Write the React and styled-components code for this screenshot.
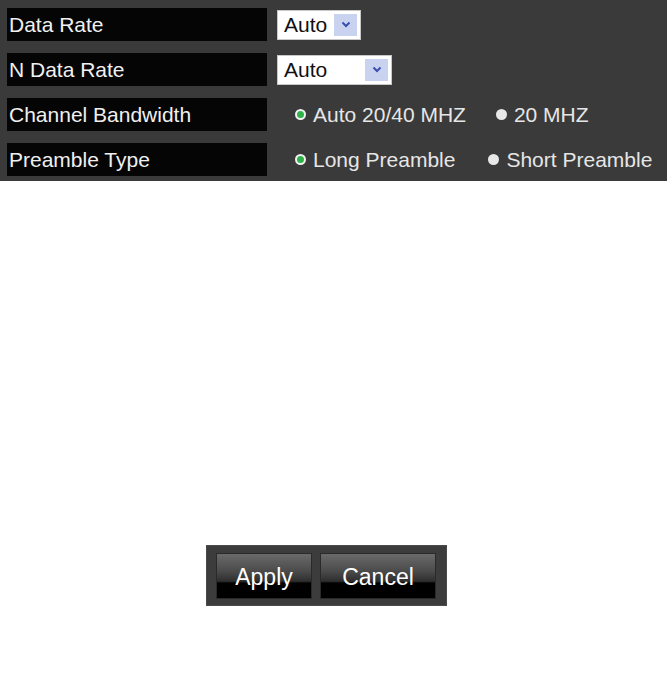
import React, { useState } from "react";
import styled, { createGlobalStyle } from "styled-components";

const GlobalStyle = createGlobalStyle`
  html, body {
    margin: 0;
    padding: 0;
    background: #ffffff;
    font-family: "Liberation Sans", Arial, sans-serif;
  }
`;

const rows = [
  { label: "Data Rate", kind: "select", width: 84 },
  { label: "N Data Rate", kind: "select", width: 115 },
  {
    label: "Channel Bandwidth",
    kind: "radio",
    options: [
      { text: "Auto 20/40 MHZ", gap: 30 },
      { text: "20 MHZ" },
    ],
  },
  {
    label: "Preamble Type",
    kind: "radio",
    options: [
      { text: "Long Preamble", gap: 33 },
      { text: "Short Preamble" },
    ],
  },
];

const App = () => {
  const [picked, setPicked] = useState({ 2: 0, 3: 0 });

  return (
    <Page>
      <GlobalStyle />
      <Panel>
        {rows.map((row, i) => (
          <Row key={row.label}>
            <Label>{row.label}</Label>
            {row.kind === "select" ? (
              <Select $width={row.width}>
                <span>Auto</span>
                <Arrow>
                  <svg width="10" height="7" viewBox="0 0 10 7">
                    <path d="M1.5 1.5 L5 5 L8.5 1.5" fill="none" stroke="#3a4fb0" strokeWidth="2" />
                  </svg>
                </Arrow>
              </Select>
            ) : (
              <Radios>
                {row.options.map((opt, j) => (
                  <RadioItem
                    key={opt.text}
                    $gap={opt.gap || 0}
                    onClick={() => setPicked({ ...picked, [i]: j })}
                  >
                    <Dot $on={picked[i] === j} />
                    {opt.text}
                  </RadioItem>
                ))}
              </Radios>
            )}
          </Row>
        ))}
      </Panel>
      <Footer>
        <ButtonBox>
          <Button $width={96}>Apply</Button>
          <Button $width={116}>Cancel</Button>
        </ButtonBox>
      </Footer>
    </Page>
  );
};

const Page = styled.div`
  width: 667px;
  height: 691px;
  display: flex;
  flex-direction: column;
`;

const Panel = styled.div`
  background: #3a3a3a;
  height: 181px;
  padding: 8px 0 0 7px;
  box-sizing: border-box;
  display: flex;
  flex-direction: column;
  gap: 12px;
`;

const Row = styled.div`
  display: flex;
  align-items: center;
  height: 33px;
`;

const Label = styled.div`
  width: 260px;
  height: 33px;
  background: #050505;
  color: #f0f0f0;
  font-size: 21px;
  line-height: 33px;
  padding-left: 2px;
  box-sizing: border-box;
  flex-shrink: 0;
  white-space: nowrap;
`;

const Select = styled.div`
  margin-left: 10px;
  width: ${(p) => p.$width}px;
  height: 30px;
  background: #ffffff;
  border: 1px solid #c8c8c8;
  box-sizing: border-box;
  display: flex;
  align-items: center;
  justify-content: space-between;
  padding: 0 3px 0 6px;
  font-size: 21px;
  color: #111;
`;

const Arrow = styled.div`
  width: 23px;
  height: 22px;
  background: #c9d3ef;
  display: flex;
  align-items: center;
  justify-content: center;
`;

const Radios = styled.div`
  display: flex;
  align-items: center;
  margin-left: 28px;
`;

const RadioItem = styled.div`
  display: flex;
  align-items: center;
  gap: 7px;
  margin-right: ${(p) => p.$gap}px;
  color: #e6e6e6;
  font-size: 21px;
  white-space: nowrap;
  cursor: pointer;
`;

const Dot = styled.span`
  width: 11px;
  height: 11px;
  border-radius: 50%;
  background: ${(p) => (p.$on ? "#2fb24a" : "#e8e8e8")};
  border: ${(p) => (p.$on ? "2.5px solid #f2f2f2" : "0")};
  box-sizing: border-box;
  display: inline-block;
  flex-shrink: 0;
`;

const Footer = styled.div`
  display: flex;
  padding: 364px 0 0 206px;
`;

const ButtonBox = styled.div`
  width: 241px;
  height: 61px;
  background: #3c3c3c;
  border: 1px solid #4a4a4a;
  box-sizing: border-box;
  display: flex;
  align-items: center;
  gap: 8px;
  padding-left: 9px;
`;

const Button = styled.div`
  width: ${(p) => p.$width}px;
  height: 46px;
  background: linear-gradient(
    to bottom,
    #6a6a6a 0%,
    #4a4a4a 40%,
    #2e2e2e 62%,
    #000000 66%,
    #000000 100%
  );
  border: 1px solid #2a2a2a;
  box-sizing: border-box;
  color: #ffffff;
  font-size: 23px;
  display: flex;
  align-items: center;
  justify-content: center;
  padding-top: 4px;
`;

export default App;
